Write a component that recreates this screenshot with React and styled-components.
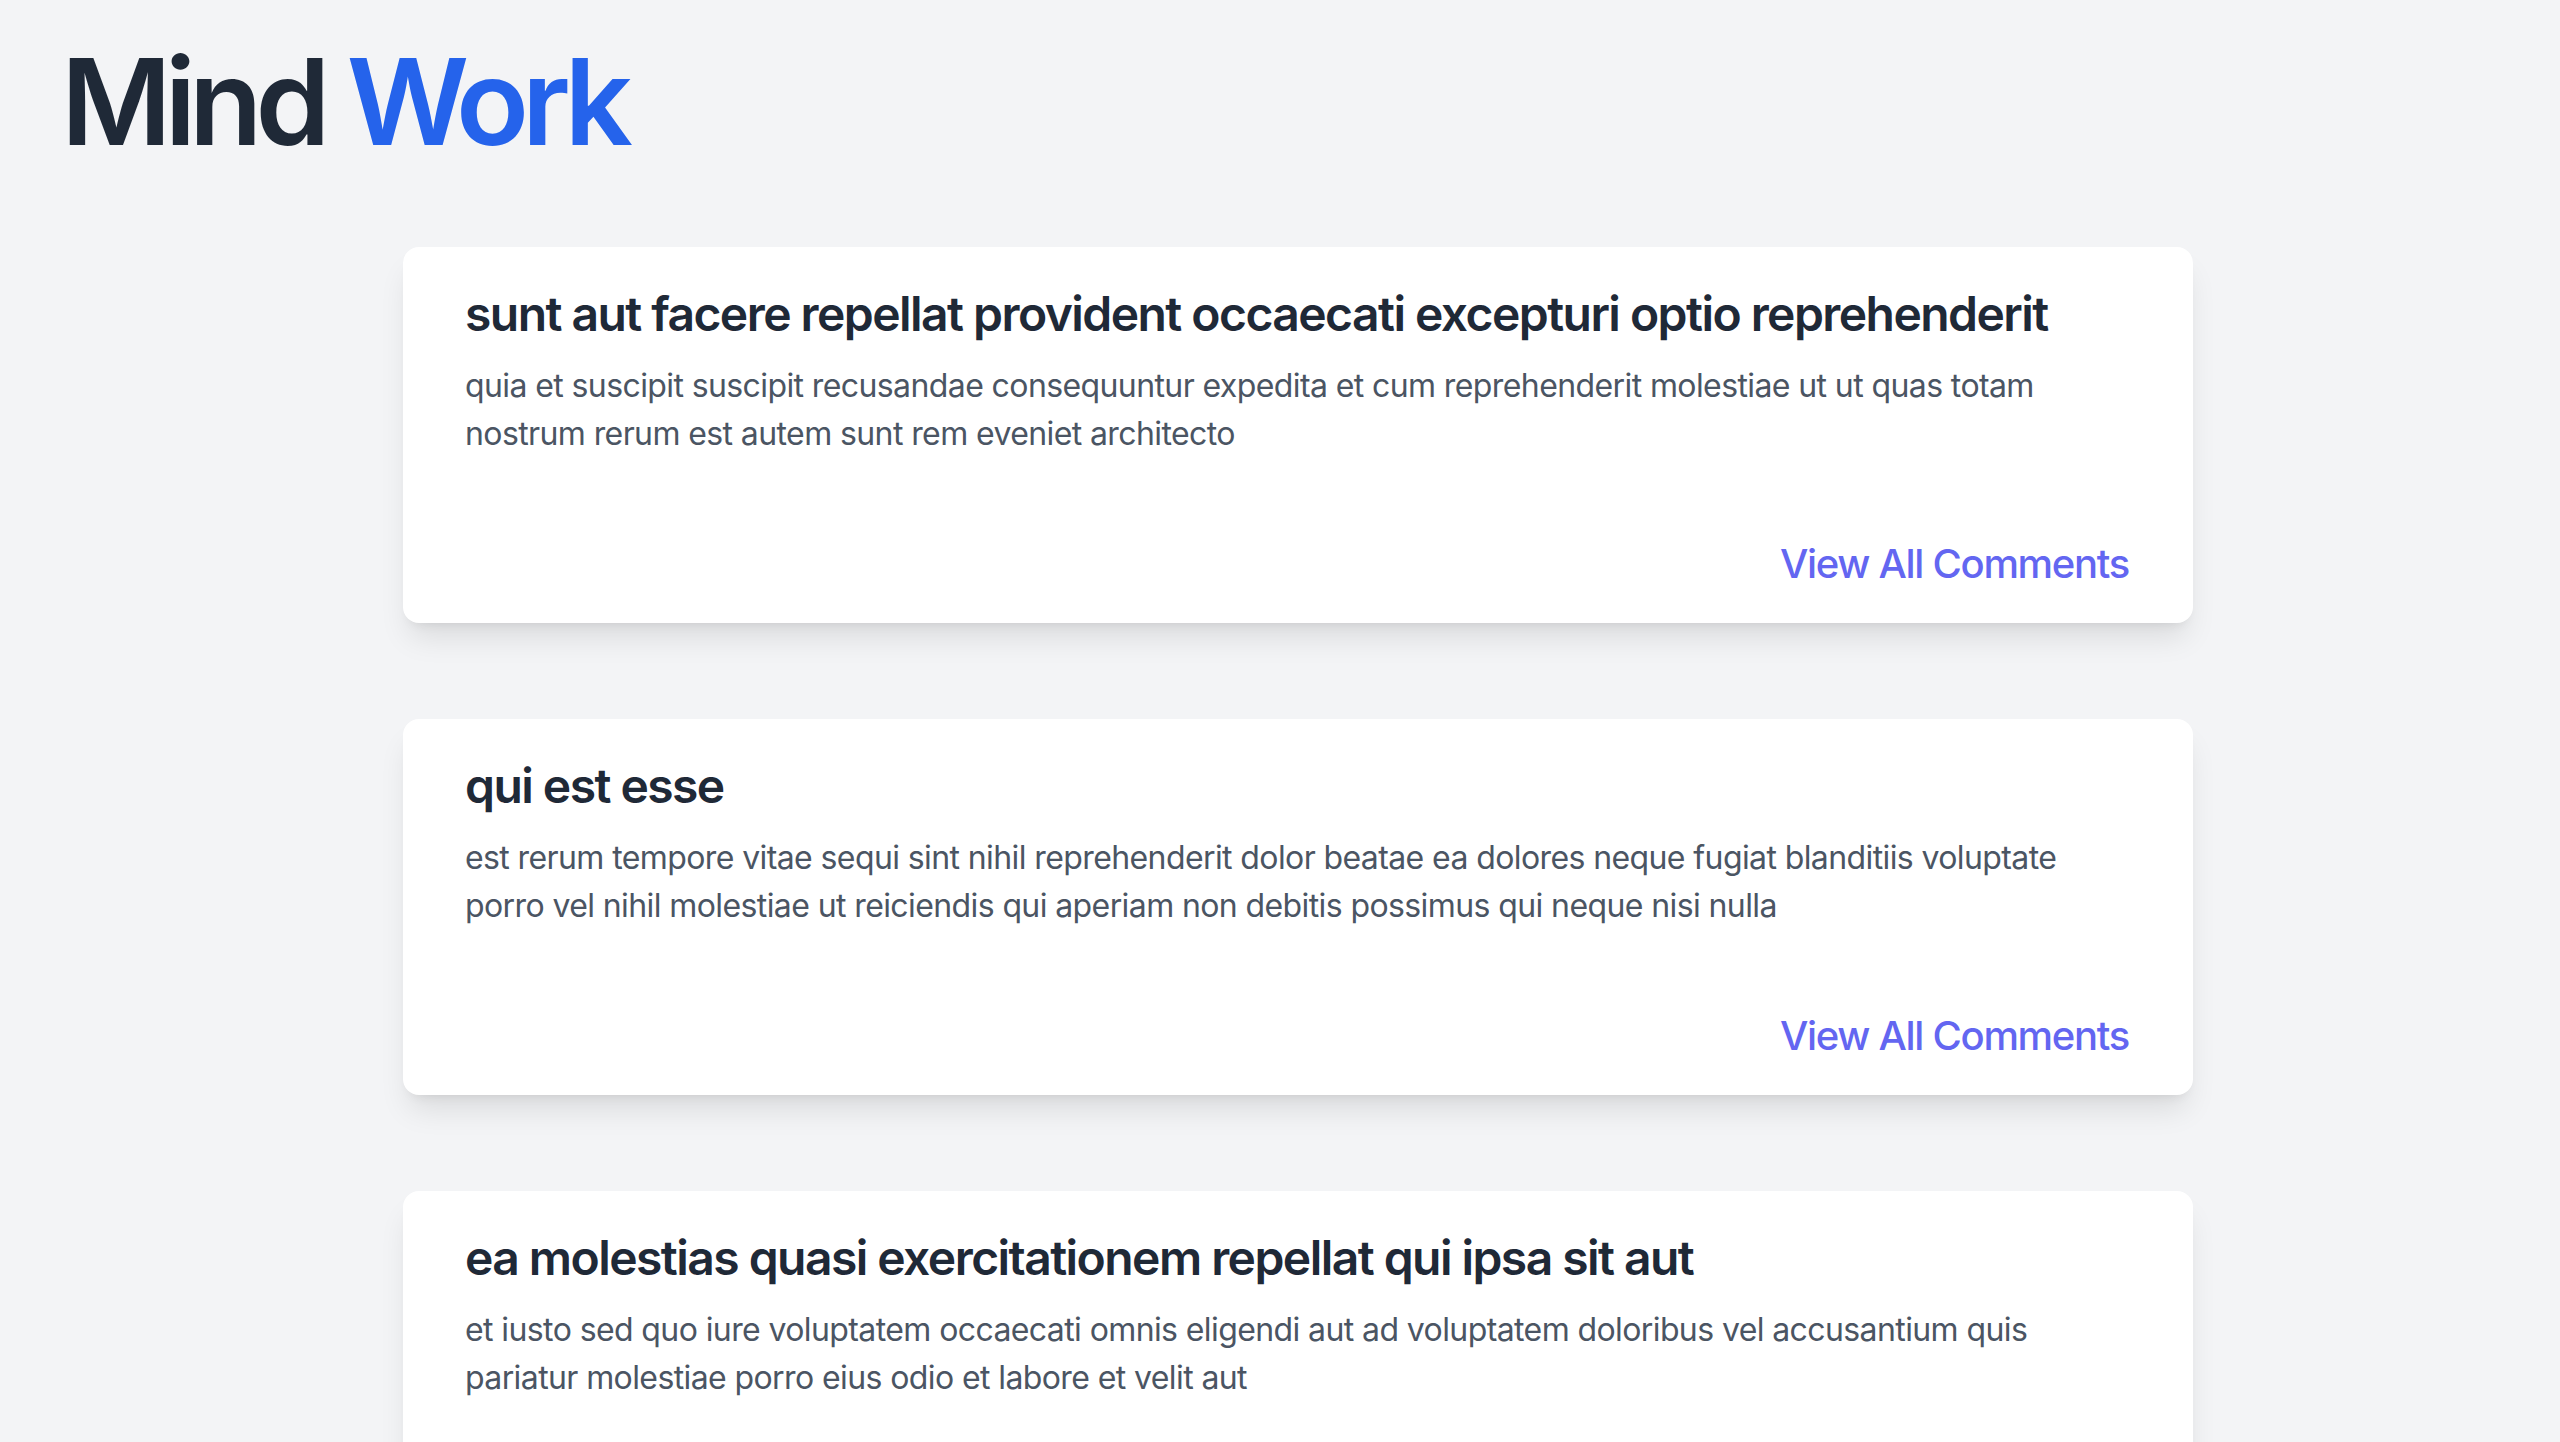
import React from 'react';
import styled, { createGlobalStyle } from 'styled-components';

const GlobalStyle = createGlobalStyle`
    html {
        background: #f3f4f6;
    }

    body {
        margin: 0;
        background: #f3f4f6;
        font-family: Inter, "Noto Sans", "Liberation Sans", sans-serif;
    }

    ::-webkit-scrollbar {
        width: 30px;
    }

    ::-webkit-scrollbar-track {
        background: #fafafa;
        border-left: 1px solid #e8e8e8;
    }

    ::-webkit-scrollbar-thumb {
        background: #c1c1c1;
        background-clip: padding-box;
        border-style: solid;
        border-color: transparent;
        border-width: 4px 6px 4px 8px;
        border-radius: 14px;
    }
`;

const Page = styled.div`
    min-height: 100vh;
    padding-bottom: 96px;
`;

const Header = styled.header`
    padding: 42px 0 0 61px;
`;

const Logo = styled.h1`
    margin: 0;
    font-size: 120px;
    line-height: 120px;
    font-weight: 600;
    letter-spacing: -7px;
    color: #1f2937;
`;

const Accent = styled.span`
    color: #2563eb;
`;

const Feed = styled.main`
    display: flex;
    flex-flow: column;
    gap: 96px;
    width: 1790px;
    margin: 85px 0 0 403px;
`;

const Card = styled.article`
    background: #ffffff;
    border-radius: 16px;
    padding: 35px 64px 15px 62px;
    box-shadow: 0 20px 30px -6px rgba(0, 0, 0, 0.1), 0 8px 12px -8px rgba(0, 0, 0, 0.1);
`;

const Title = styled.h2`
    margin: 0 0 16px;
    font-size: 48px;
    line-height: 64px;
    font-weight: 600;
    letter-spacing: -1.55px;
    color: #1f2937;
`;

const Body = styled.p`
    margin: 0;
    font-size: 32px;
    line-height: 48px;
    font-weight: 400;
    letter-spacing: -0.6px;
    color: #4b5563;
`;

const Footer = styled.div`
    display: flex;
    justify-content: flex-end;
    margin-top: 62px;
`;

const CommentsButton = styled.button`
    padding: 16px 0;
    border: 0;
    background: none;
    font-family: inherit;
    font-size: 40px;
    line-height: 56px;
    font-weight: 500;
    letter-spacing: -1.3px;
    color: #6366f1;
    cursor: pointer;
`;

const posts = [
    {
        id: 1,
        title: 'sunt aut facere repellat provident occaecati excepturi optio reprehenderit',
        body: 'quia et suscipit\nsuscipit recusandae consequuntur expedita et cum\nreprehenderit molestiae ut ut quas totam\nnostrum rerum est autem sunt rem eveniet architecto',
    },
    {
        id: 2,
        title: 'qui est esse',
        body: 'est rerum tempore vitae\nsequi sint nihil reprehenderit dolor beatae ea dolores neque\nfugiat blanditiis voluptate porro vel nihil molestiae ut reiciendis\nqui aperiam non debitis possimus qui neque nisi nulla',
    },
    {
        id: 3,
        title: 'ea molestias quasi exercitationem repellat qui ipsa sit aut',
        body: 'et iusto sed quo iure\nvoluptatem occaecati omnis eligendi aut ad\nvoluptatem doloribus vel accusantium quis pariatur\nmolestiae porro eius odio et labore et velit aut',
    },
    {
        id: 4,
        title: 'eum et est occaecati',
        body: 'ullam et saepe reiciendis voluptatem adipisci\nsit amet autem assumenda provident rerum culpa\nquis hic commodi nesciunt rem tenetur doloremque ipsam iure\nquis sunt voluptatem rerum illo velit',
    },
    {
        id: 5,
        title: 'nesciunt quas odio',
        body: 'repudiandae veniam quaerat sunt sed\nalias aut fugiat sit autem sed est\nvoluptatem omnis possimus esse voluptatibus quis\nest aut tenetur dolor neque',
    },
];

const PostCard = ({ post }) => (
    <Card>
        <Title>{post.title}</Title>
        <Body>{post.body}</Body>
        <Footer>
            <CommentsButton type="button">View All Comments</CommentsButton>
        </Footer>
    </Card>
);

const App = () => {
    return (
        <>
            <GlobalStyle />
            <Page>
                <Header>
                    <Logo>
                        Mind <Accent>Work</Accent>
                    </Logo>
                </Header>
                <Feed>
                    {posts.map(post => (
                        <PostCard key={post.id} post={post} />
                    ))}
                </Feed>
            </Page>
        </>
    );
};

export default App;
